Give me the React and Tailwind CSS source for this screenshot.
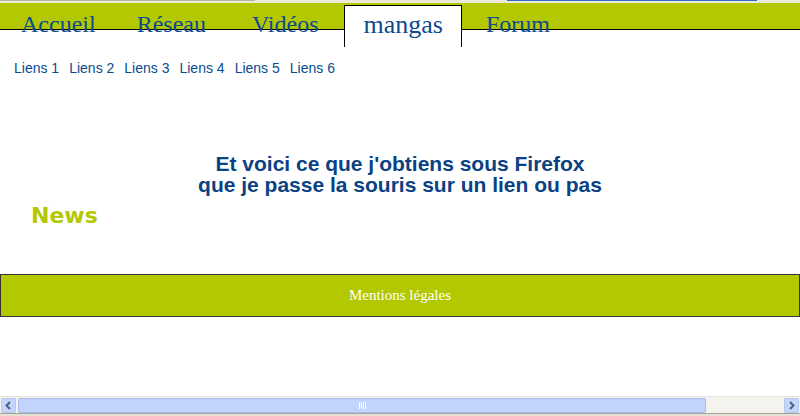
const tabs = [
  { label: 'Accueil', ml: 'ml-[21px]' },
  { label: 'Réseau', ml: 'ml-[41px]' },
  { label: 'Vidéos', ml: 'ml-[46px]' },
];

const liens = ['Liens 1', 'Liens 2', 'Liens 3', 'Liens 4', 'Liens 5', 'Liens 6'];

const Arrow = ({ dir }) => (
  <div className="flex h-[15px] w-[15px] items-center justify-center rounded-[2px] border border-[#b4c6f2] bg-[#c6d6fb]">
    <svg width="9" height="9" viewBox="0 0 9 9">
      {dir === 'left' ? (
        <polyline points="6,1 2.5,4.5 6,8" fill="none" stroke="#4d6185" strokeWidth="2" />
      ) : (
        <polyline points="3,1 6.5,4.5 3,8" fill="none" stroke="#4d6185" strokeWidth="2" />
      )}
    </svg>
  </div>
);

const App = () => {
  return (
    <div className="flex h-[416px] w-[800px] flex-col overflow-hidden bg-white">
      {/* barre du navigateur */}
      <div className="flex h-[3px] bg-[#ece9d8]">
        <div className="h-[1px] w-[255px] bg-[#b8b4a6]" />
        <div className="ml-[252px] h-[1px] w-[250px] bg-[#316ac5]" />
      </div>

      <nav className="flex h-[27px] items-start border-b border-black bg-[#b3c800] font-['Liberation_Serif',serif] text-[#0d4a8e]">
        {tabs.map((t) => (
          <a key={t.label} className={`${t.ml} mt-[9px] text-[24px] leading-[24px] whitespace-nowrap`}>
            {t.label}
          </a>
        ))}
        <a className="relative ml-[25px] mt-[2px] h-[42px] border border-b-0 border-black bg-white pl-[19px] pr-[18px] pt-[6px] text-[26px] leading-[26px]">
          mangas
        </a>
        <a className="ml-[24px] mt-[9px] text-[24px] leading-[24px]">Forum</a>
      </nav>

      <div className="ml-[14px] mt-[30px] flex gap-[10px] font-['Liberation_Sans',sans-serif] text-[14px] leading-[16px] text-[#0a4a8f]">
        {liens.map((l) => (
          <a key={l}>{l}</a>
        ))}
      </div>

      <h2 className="mt-[77px] text-center font-['Liberation_Sans',sans-serif] text-[21px] font-bold leading-[21px] text-[#0a4283]">
        Et voici ce que j'obtiens sous Firefox
        <br />
        que je passe la souris sur un lien ou pas
      </h2>

      <h3 className="ml-[31px] mt-[8px] font-['DejaVu_Sans',sans-serif] text-[22px] font-bold leading-[26px] text-[#b3c800]">
        News
      </h3>

      <footer className="mt-[45px] flex h-[43px] items-center justify-center border border-[#333333] bg-[#b3c800] font-['Liberation_Serif',serif] text-[15px] text-white">
        Mentions légales
      </footer>

      <div className="flex-1" />

      {/* barre de défilement */}
      <div className="flex h-[17px] items-center border-t border-[#e6e3d8] bg-[#f4f3ee] px-[1px]">
        <Arrow dir="left" />
        <div className="ml-[2px] flex h-[15px] w-[688px] items-center justify-center rounded-[2px] border border-[#a6bbef] bg-[#c2d3fc]">
          <div className="flex gap-[1px]">
            <div className="h-[7px] w-[1px] bg-white" />
            <div className="h-[7px] w-[1px] bg-white" />
            <div className="h-[7px] w-[1px] bg-white" />
            <div className="h-[7px] w-[1px] bg-white" />
          </div>
        </div>
        <div className="flex-1" />
        <Arrow dir="right" />
      </div>
      <div className="h-[3px] border-t border-[#a8a596] bg-[#e4e1d6]" />
    </div>
  );
};

export default App;
